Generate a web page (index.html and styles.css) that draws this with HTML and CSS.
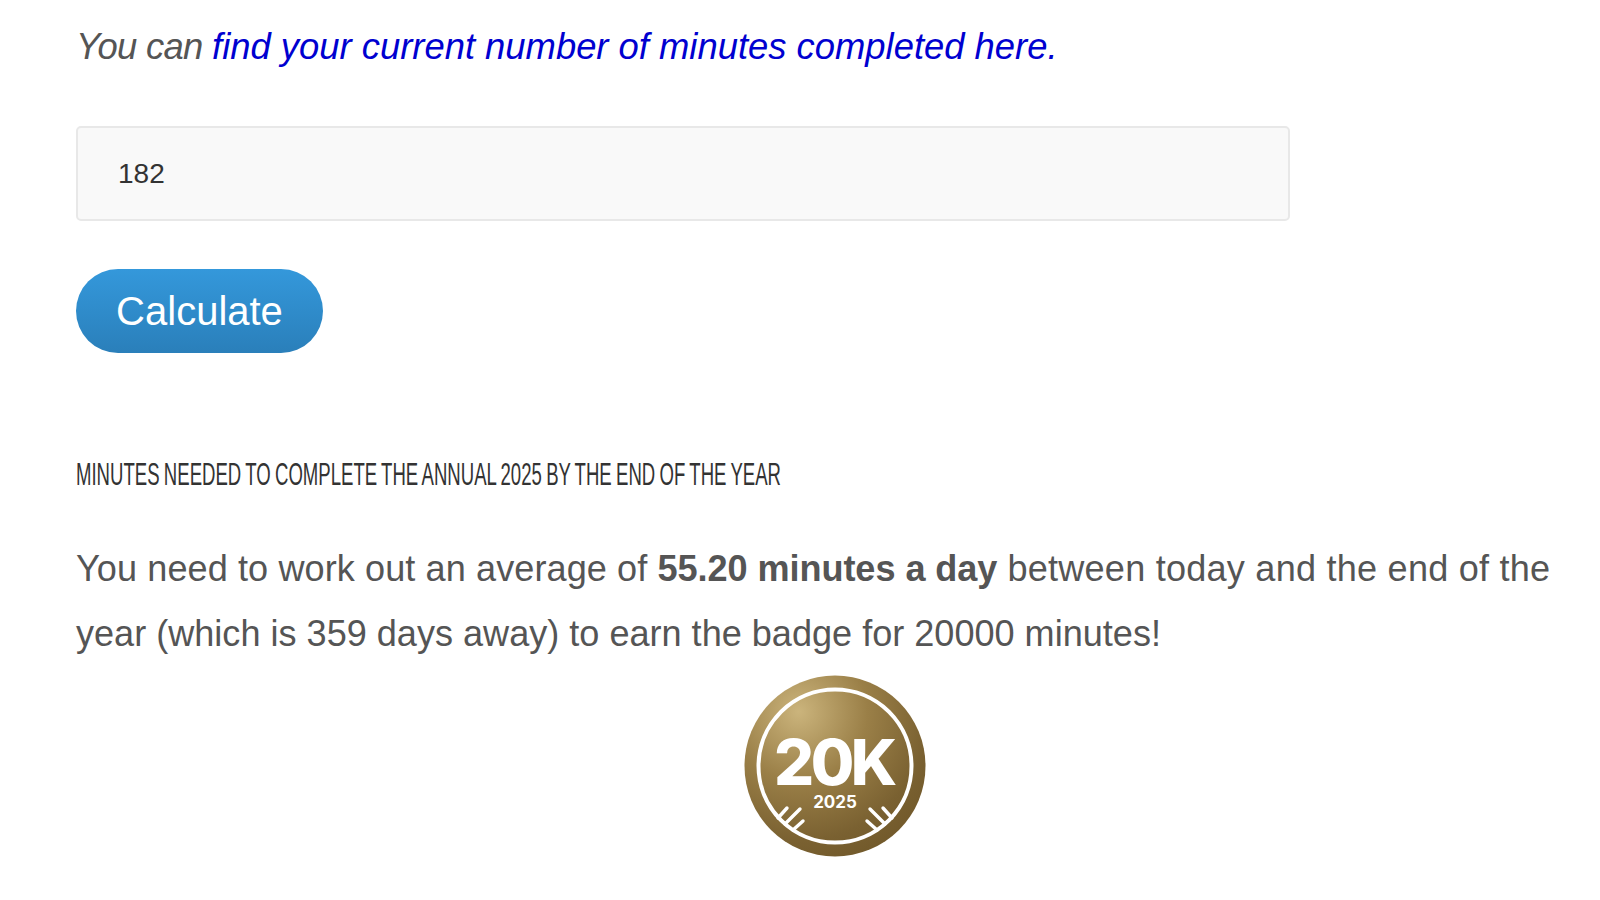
FILE: index.html
```html
<!DOCTYPE html>
<html lang="en">
<head>
<meta charset="utf-8">
<title>Minutes calculator</title>
<link rel="stylesheet" href="styles.css">
</head>
<body>
<main class="page">
  <p class="intro">You can <a class="intro-link" href="#">find your current number of minutes completed here.</a></p>
  <input class="minutes" type="text" value="182">
  <button class="calc" type="button">Calculate</button>
  <h2 class="result-title"><span class="result-title-text">MINUTES NEEDED TO COMPLETE THE ANNUAL 2025 BY THE END OF THE YEAR</span></h2>
  <p class="result"><span class="result-head">You need to work out an average of</span> <strong class="result-strong">55.20 minutes a day</strong> <span class="result-tail">between today and the end of the</span> year (which is 359 days away) to earn the badge for 20000 minutes!</p>
  <div class="badge-row">
    <svg class="badge" viewBox="0 0 182 182" width="182" height="182" role="img" aria-label="20K 2025 badge">
      <defs>
        <radialGradient id="gold" cx="0.3" cy="0.2" r="0.95">
          <stop offset="0" stop-color="#cbb47c"/>
          <stop offset="0.4" stop-color="#9a7f47"/>
          <stop offset="0.75" stop-color="#7a6131"/>
          <stop offset="1" stop-color="#6e5628"/>
        </radialGradient>
      </defs>
      <circle cx="91" cy="91" r="90.5" fill="url(#gold)"/>
      <circle cx="91" cy="91" r="76.5" fill="none" stroke="#fff" stroke-width="4"/>
      <g stroke="#fff" stroke-width="3.4" stroke-linecap="round" fill="none">
        <path d="M34 143 L43 133 M41 149 L56 134 M49 155 L59 146"/>
        <path d="M148 143 L139 133 M141 149 L126 134 M133 155 L123 146"/>
      </g>
      <text class="badge-big" x="90" y="110" text-anchor="middle">20K</text>
      <text class="badge-year" x="91" y="133" text-anchor="middle">2025</text>
    </svg>
  </div>
</main>
</body>
</html>
```
FILE: styles.css
```css
html, body { margin: 0; padding: 0; background: #fff; }
body { height: 900px; overflow: hidden; font-family: "Liberation Sans", Arial, sans-serif; color: #555; }
.page { padding: 0 0 0 76px; width: 1480px; display: flex; flex-direction: column; align-items: flex-start; }
.intro { margin: 27px 0 0; font-size: 36.4px; line-height: 40px; font-style: italic; color: #555; white-space: nowrap; letter-spacing: -0.7px; }
.intro-link { color: #0000d0; text-decoration: none; letter-spacing: 0; }
.minutes { box-sizing: border-box; margin: 59px 0 0; width: 1214px; height: 95px; padding: 0 40px; background: #f9f9f9; border: 2px solid #e8e8e8; border-radius: 5px; font-family: inherit; font-size: 28px; color: #333; outline: none; }
.calc { margin: 48px 0 0; width: 247px; height: 84px; padding: 0; border: 0; border-radius: 42px; background: linear-gradient(#3498db, #2a7fba); color: #fff; font-family: inherit; font-size: 40px; }
.result-title { margin: 103px 0 0; font-family: "Liberation Sans", sans-serif; font-weight: 400; font-size: 32px; line-height: 36px; color: #333; white-space: nowrap; }
.result-title-text { display: inline-block; transform: scaleX(0.58); transform-origin: left center; word-spacing: -1.4px; }
.result { margin: 44px 0 0; font-size: 36.1px; line-height: 65px; color: #555; width: 1490px; }
.result-head { letter-spacing: 0.09px; }
.result-strong { font-weight: 700; letter-spacing: -0.05px; }
.result-tail { letter-spacing: 0.23px; }
.badge-row { display: flex; width: 1518px; justify-content: center; margin-top: 9px; }
.badge { display: block; }
.badge-big { font-family: Inter, "Liberation Sans", sans-serif; font-weight: 800; font-size: 63px; letter-spacing: -3.5px; fill: #fff; }
.badge-year { font-family: Inter, "Liberation Sans", sans-serif; font-weight: 700; font-size: 17px; fill: #fff; }
```
